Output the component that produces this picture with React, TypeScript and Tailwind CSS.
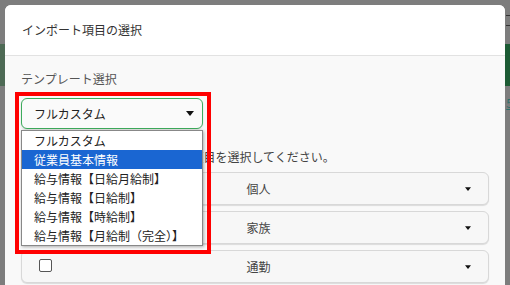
import React from 'react';

const font = { fontFamily: '"Noto Sans CJK JP", "Noto Sans", sans-serif' };

const templates = [
  'フルカスタム',
  '従業員基本情報',
  '給与情報【日給月給制】',
  '給与情報【日給制】',
  '給与情報【時給制】',
  '給与情報【月給制（完全）】',
];

const sections = ['個人', '家族', '通勤'];

const Caret: React.FC<{ w?: number; h?: number }> = ({ w = 7, h = 4 }) => (
  <svg width={w} height={h} viewBox="0 0 8 5" className="shrink-0">
    <path d="M0 0 L8 0 L4 5 Z" fill="#111" />
  </svg>
);

const App: React.FC = () => {
  return (
    <div className="relative w-[510px] h-[285px] overflow-hidden bg-[#7d7d7d] pt-[5px] px-[5px]" style={font}>
      {/* page behind the overlay */}
      <div className="absolute left-0 top-[44px] w-[5px] h-[42px] bg-[#4e6a55]" />
      <div className="absolute right-0 top-[44px] w-[5px] h-[42px] bg-[#1c5b34]" />
      <div className="absolute right-0 top-[15px] w-[4px] h-px bg-[#333]" />
      <div className="absolute right-0 top-[25px] w-[4px] h-px bg-[#333]" />
      <div className="absolute right-[-3px] top-[95px] text-[12px] leading-[16px] text-[#2d6f6a] underline">5</div>

      {/* modal */}
      <div className="h-[290px] rounded-t-[6px] bg-[#f9f9f9] overflow-hidden">
        <div className="h-[51px] bg-white border-b border-[#e2e2e2] flex items-center pl-[17px] text-[12px] text-[#333]">
          インポート項目の選択
        </div>

        <div className="px-[16px]">
          <div className="mt-[15px] text-[12px] leading-[16px] text-[#555]">テンプレート選択</div>

          <div className="mt-[11px] w-[182px] h-[31px] rounded-[6px] border border-[#3dab5c] bg-[#fafafa] shadow-[0_1px_2px_rgba(0,0,0,0.12)] flex items-center justify-between pl-[12px] pr-[8px] text-[12px] text-[#222]">
            <span>フルカスタム</span>
            <Caret w={8} h={5} />
          </div>

          <div className="mt-[20px] ml-[15px] text-[12px] leading-[16px] text-[#444]">
            テンプレートを選択するか、項目を選択してください。
          </div>

          <div className="mt-[7px] flex flex-col gap-[6px]">
            {sections.map((s) => (
              <div
                key={s}
                className="h-[33px] rounded-[6px] border border-[#d8d8d8] bg-[#f7f7f7] shadow-[0_1px_1px_rgba(0,0,0,0.12)] flex items-center pl-[17px] pr-[17px]"
              >
                <div className="w-[13px] h-[13px] -mt-[2px] rounded-[2px] border border-[#555] bg-white shrink-0" />
                <div className="flex-1 text-center text-[12px] text-[#444]">{s}</div>
                <Caret w={6} h={4} />
              </div>
            ))}
          </div>
        </div>
      </div>

      {/* open dropdown list */}
      <div className="absolute left-[21px] top-[130px] w-[182px] border border-[#888] bg-white shadow-[1px_1px_3px_rgba(0,0,0,0.3)]">
        {templates.map((t, i) => (
          <div
            key={t}
            className={`h-[19px] leading-[19px] pl-[12px] text-[12px] ${i === 1 ? 'bg-[#1a66d2] text-white' : 'text-[#222]'}`}
          >
            {t}
          </div>
        ))}
      </div>

      {/* highlight frame */}
      <div className="absolute left-[15px] top-[92px] w-[196px] h-[162px] border-4 border-[#ff0000]" />
    </div>
  );
};

export default App;
